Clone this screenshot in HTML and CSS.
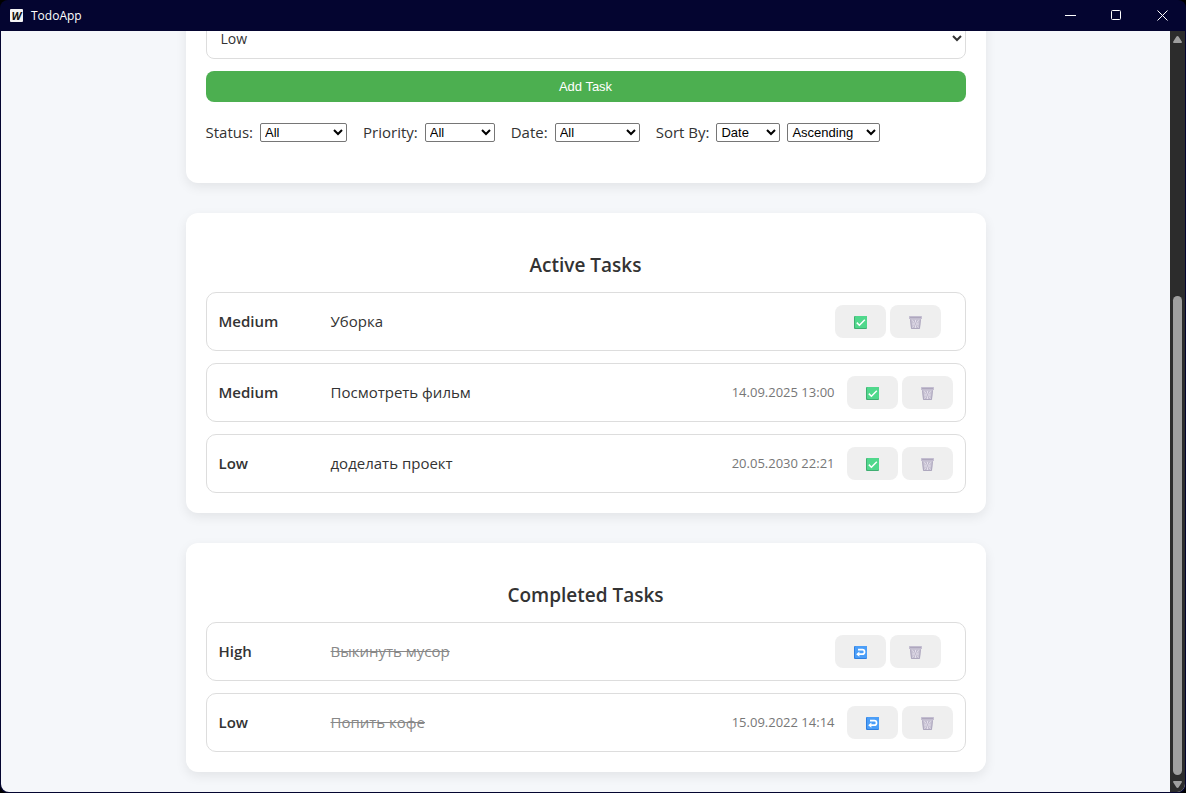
FILE: index.html
```html
<!DOCTYPE html>
<html lang="en">
<head>
<meta charset="utf-8">
<title>TodoApp</title>
<link rel="stylesheet" href="styles.css">
</head>
<body>
<svg class="sprite" aria-hidden="true">
  <symbol id="check" viewBox="0 0 13 13">
    <rect width="13" height="13" rx="1" fill="#3fae72"/>
    <rect x="1" width="12" height="12" rx="1" fill="#50d88c"/>
    <path d="M2.8 6.6 5.4 9.2 10.8 3.8" fill="none" stroke="#fff" stroke-width="1.5"/>
  </symbol>
  <symbol id="trash" viewBox="0 0 13 13">
    <path d="M.8 2H12.2L11 13H2Z" fill="#c9c4d4"/>
    <path d="M3.6 4.2 9.2 11.5M9.4 4.2 3.8 11.5M6.5 4V12M3.4 8H9.6" fill="none" stroke="#e6e2ee" stroke-width=".9"/>
    <path d="M1.6 3.5 2.6 12.5H10.4L11.4 3.5" fill="none" stroke="#aea8be"/>
    <path d="M4.6 3.8 8.4 11.8M8.4 3.8 4.6 11.8" fill="none" stroke="#aaa4ba" stroke-width=".5"/>
    <rect y="0" width="13" height="3" rx=".5" fill="#c3bdd0"/>
    <path d="M1 1.5H12" stroke="#a8a1b8" stroke-width=".8"/>
  </symbol>
  <symbol id="undo" viewBox="0 0 13 13">
    <rect width="13" height="13" rx="1" fill="#2f7fe0"/>
    <rect x="1" width="12" height="12" rx="1" fill="#4b9ef8"/>
    <path d="M4 3.7H8.3A2.2 2.2 0 0 1 8.3 8.2H4.5" fill="none" stroke="#fff" stroke-width="1.7"/>
    <path d="M5.4 5.6V10.8L2.2 8.2Z" fill="#fff"/>
  </symbol>
</svg>
<div class="window">
  <header class="titlebar">
    <span class="logo" aria-hidden="true">W</span>
    <span class="app-name">TodoApp</span>
    <button class="win-btn" aria-label="Minimize"><svg width="11" height="11" viewBox="0 0 11 11"><path d="M0 5.5H11" stroke="#fff"/></svg></button>
    <button class="win-btn" aria-label="Maximize"><svg width="11" height="11" viewBox="0 0 11 11"><rect x=".5" y=".5" width="9" height="9" rx="1" fill="none" stroke="#fff"/></svg></button>
    <button class="win-btn" aria-label="Close"><svg width="11" height="11" viewBox="0 0 11 11"><path d="M.5.5 10.5 10.5M10.5.5.5 10.5" stroke="#fff"/></svg></button>
  </header>
  <div class="viewport">
    <main class="content">
      <section class="card">
        <form class="task-form">
          <select class="priority-input" aria-label="Task priority"><option>Low</option><option>Medium</option><option>High</option></select>
          <button class="add-btn" type="button">Add Task</button>
        </form>
        <div class="filters">
          <div class="filter"><label for="status">Status:</label>
            <select id="status" class="sel-status"><option>All</option><option>Active</option><option>Completed</option></select></div>
          <div class="filter"><label for="priority">Priority:</label>
            <select id="priority" class="sel-priority"><option>All</option><option>Low</option><option>Medium</option><option>High</option></select></div>
          <div class="filter"><label for="date">Date:</label>
            <select id="date" class="sel-date"><option>All</option><option>Today</option><option>This week</option></select></div>
          <div class="filter"><label for="sort">Sort By:</label>
            <select id="sort" class="sel-sort"><option>Date</option><option>Priority</option></select>
            <select class="sel-order" aria-label="Sort order"><option>Ascending</option><option>Descending</option></select></div>
        </div>
      </section>

      <section class="card">
        <h2>Active Tasks</h2>
        <ul class="tasks">
          <li class="task undated">
            <strong>Medium</strong><span class="text">Уборка</span>
            <div class="actions"><button aria-label="Complete"><svg><use href="#check"/></svg></button><button aria-label="Delete"><svg><use href="#trash"/></svg></button></div>
          </li>
          <li class="task">
            <strong>Medium</strong><span class="text">Посмотреть фильм</span><time>14.09.2025 13:00</time>
            <div class="actions"><button aria-label="Complete"><svg><use href="#check"/></svg></button><button aria-label="Delete"><svg><use href="#trash"/></svg></button></div>
          </li>
          <li class="task">
            <strong>Low</strong><span class="text">доделать проект</span><time>20.05.2030 22:21</time>
            <div class="actions"><button aria-label="Complete"><svg><use href="#check"/></svg></button><button aria-label="Delete"><svg><use href="#trash"/></svg></button></div>
          </li>
        </ul>
      </section>

      <section class="card">
        <h2>Completed Tasks</h2>
        <ul class="tasks">
          <li class="task done undated">
            <strong>High</strong><span class="text">Выкинуть мусор</span>
            <div class="actions"><button aria-label="Restore"><svg><use href="#undo"/></svg></button><button aria-label="Delete"><svg><use href="#trash"/></svg></button></div>
          </li>
          <li class="task done">
            <strong>Low</strong><span class="text">Попить кофе</span><time>15.09.2022 14:14</time>
            <div class="actions"><button aria-label="Restore"><svg><use href="#undo"/></svg></button><button aria-label="Delete"><svg><use href="#trash"/></svg></button></div>
          </li>
        </ul>
      </section>
    </main>
    <div class="scrollbar" aria-hidden="true">
      <svg width="9" height="7" viewBox="0 0 9 7"><path d="M4.5 0Q5.2 0 5.7.8L9 6Q9 7 8 7H1Q0 7 0 6L3.3.8Q3.8 0 4.5 0Z" fill="#9f9f9f"/></svg>
      <div class="track"><div class="thumb"></div></div>
      <svg width="9" height="7" viewBox="0 0 9 7"><path d="M4.5 7Q5.2 7 5.7 6.2L9 1Q9 0 8 0H1Q0 0 0 1L3.3 6.2Q3.8 7 4.5 7Z" fill="#9f9f9f"/></svg>
    </div>
  </div>
</div>
</body>
</html>
```
FILE: styles.css
```css
* { box-sizing: border-box; }
body {
  margin: 0;
  background: #000;
  color: #333;
  font: 15px/21px "Open Sans", "Noto Sans", sans-serif;
}
button, select { font: 13px "Liberation Sans", Arial, sans-serif; }
.sprite { display: none; }

.window {
  display: flex;
  flex-direction: column;
  height: 100vh;
  padding: 0 1px 1px;
  background: #040530;
  border-radius: 8px;
  overflow: hidden;
}
.titlebar {
  display: flex;
  flex: none;
  align-items: center;
  height: 31px;
  padding-left: 9px;
  color: #fff;
}
.logo {
  width: 13px;
  height: 13px;
  border-radius: 1px;
  background: #f4f4f4;
  color: #111;
  font: italic 700 11px/13px "Open Sans", sans-serif;
  text-align: center;
}
.app-name {
  flex: 1;
  margin-left: 8px;
  font-size: 12px;
}
.win-btn {
  display: grid;
  place-items: center;
  width: 46px;
  height: 31px;
  padding: 0;
  border: 0;
  background: none;
}

.viewport {
  display: flex;
  flex: 1;
  min-height: 0;
  background: #f5f7fa;
  border-radius: 0 0 8px 8px;
  overflow: hidden;
}
.content {
  display: flex;
  flex: 1;
  flex-direction: column;
  justify-content: flex-end;
  align-items: center;
  gap: 30px;
  padding: 0 20px 20px;
}
.card {
  flex: none;
  width: 100%;
  max-width: 800px;
  padding: 20px;
  background: #fff;
  border-radius: 12px;
  box-shadow: 0 4px 12px rgba(0, 0, 0, .08);
}
.card h2 {
  margin: 19px 0 13px;
  font-size: 19px;
  font-weight: 600;
  line-height: 27px;
  text-align: center;
}

.task-form {
  display: flex;
  flex-direction: column;
  gap: 12px;
}
.priority-input {
  height: 41px;
  padding: 0 0 0 10px;
  border: 1px solid #ddd;
  border-radius: 8px;
  background: #fff;
  color: #333;
  font: 14px "Open Sans", "Noto Sans", sans-serif;
}
.add-btn {
  height: 31px;
  border: 0;
  border-radius: 8px;
  background: #4caf50;
  color: #fff;
}
.filters {
  display: flex;
  flex-wrap: wrap;
  gap: 16px;
  margin: 20px 0;
}
.filter {
  display: flex;
  align-items: center;
  gap: 7px;
}
.filter select {
  height: 19px;
  padding: 0;
  border: 1px solid #767676;
  border-radius: 2px;
  background: #fff;
  color: #000;
}
.sel-status { width: 87px; }
.sel-priority { width: 70px; }
.sel-date { width: 85px; }
.sel-sort { width: 64px; }
.sel-order { width: 93px; }

.tasks {
  display: flex;
  flex-direction: column;
  gap: 12px;
  margin: 0;
  padding: 0;
  list-style: none;
}
.task {
  display: flex;
  align-items: center;
  gap: 12px;
  padding: 12px;
  border: 1px solid #ddd;
  border-radius: 10px;
}
.undated { padding-right: 24px; }
.task strong {
  width: 100px;
  font-weight: 600;
}
.text { flex: 1; }
.done .text {
  color: #888;
  text-decoration: line-through;
}
.task time {
  color: #777;
  font-size: 13px;
}
.actions {
  display: flex;
  gap: 4px;
}
.actions button {
  display: grid;
  place-items: center;
  width: 51px;
  height: 33px;
  padding: 1px 0 0;
  border: 0;
  border-radius: 8px;
  background: #efefef;
}
.actions svg {
  width: 13px;
  height: 13px;
}

.scrollbar {
  display: flex;
  flex: none;
  flex-direction: column;
  align-items: center;
  gap: 6px;
  width: 15px;
  padding: 5px 0 4px;
  background: #2c2c2c;
}
.track {
  display: flex;
  flex: 1;
  flex-direction: column;
  justify-content: flex-end;
  width: 9px;
}
.thumb {
  height: 66%;
  border-radius: 5px;
  background: #9f9f9f;
}
```
